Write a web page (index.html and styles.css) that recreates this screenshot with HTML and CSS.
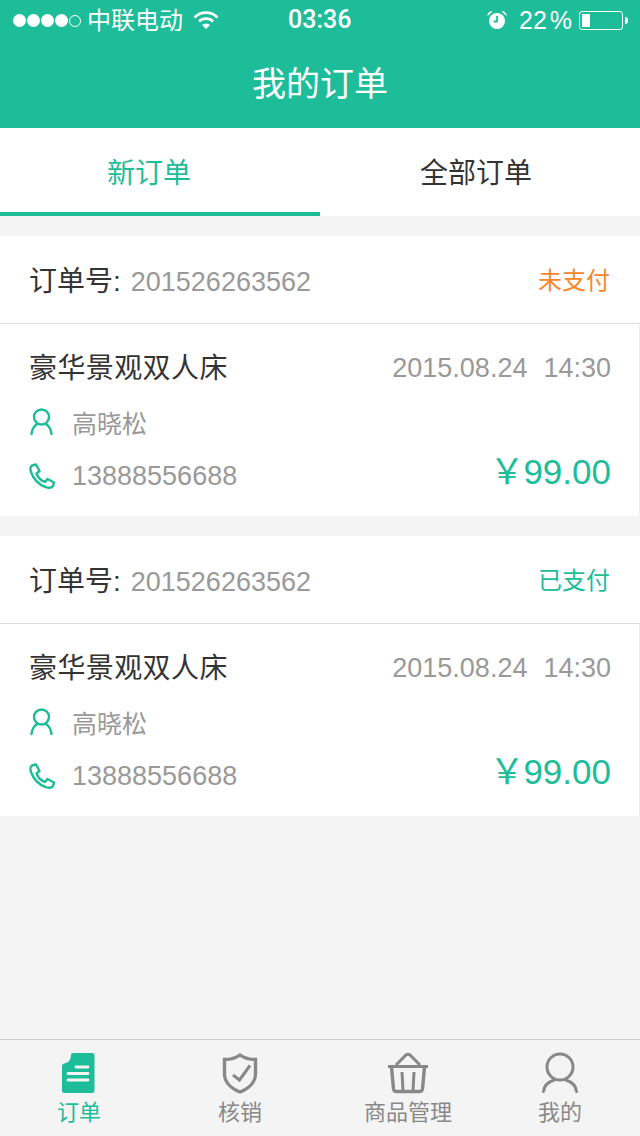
FILE: index.html
```html
<!DOCTYPE html>
<html lang="zh-CN">
<head>
    <meta charset="UTF-8">
    <title>我的订单</title>
    <link rel="stylesheet" href="styles.css">
</head>
<body>
<div class="page">
    <div class="top">
        <div class="status">
            <div class="status-left">
                <div class="signal"><i></i><i></i><i></i><i></i><i class="off"></i></div>
                <span class="carrier">中联电动</span>
                <svg class="wifi" width="26" height="20" viewBox="0 0 26 20">
                    <path d="M1.5 7.5 A16 16 0 0 1 24.5 7.5" fill="none" stroke="#fff" stroke-width="2.6"/>
                    <path d="M6 11.5 A10 10 0 0 1 20 11.5" fill="none" stroke="#fff" stroke-width="2.6"/>
                    <path d="M9 15 L13 19 L17 15 A6 6 0 0 0 9 15 Z" fill="#fff"/>
                </svg>
            </div>
            <span class="clock">03:36</span>
            <div class="status-right">
                <svg class="alarm" width="22" height="20" viewBox="0 0 22 20">
                    <circle cx="11" cy="11" r="8" fill="#fff"/>
                    <path d="M1.5 6 A4 4 0 0 1 6.5 1.5 Z M20.5 6 A4 4 0 0 0 15.5 1.5 Z" fill="#fff"/>
                    <path d="M11 6 V11.5 H7.5" fill="none" stroke="#1dbd9a" stroke-width="1.8"/>
                </svg>
                <span class="percent">22 %</span>
                <div class="battery"><div class="battery-fill"></div></div>
                <div class="battery-tip"></div>
            </div>
        </div>
        <div class="title">我的订单</div>
    </div>

    <div class="tabs">
        <div class="tab on">新订单</div>
        <div class="tab">全部订单</div>
    </div>

    <div class="order">
        <div class="order-head">
            <div class="order-no"><span class="no-label">订单号:</span><span class="no">201526263562</span></div>
            <span class="state unpaid">未支付</span>
        </div>
        <div class="order-body">
            <div class="row row-name">
                <span class="name">豪华景观双人床</span>
                <span class="date"><span>2015.08.24</span><span>14:30</span></span>
            </div>
            <div class="row row-user">
                <div class="info">
                    <svg class="ico" width="26" height="28" viewBox="0 0 26 28">
                        <circle cx="12.5" cy="9" r="7.5" fill="none" stroke="#1dbd9a" stroke-width="2.4"/>
                        <path d="M2.5 26 C3 21.5 5 18 8 16 M22.5 26 C22 21.5 20 18 17 16" fill="none" stroke="#1dbd9a" stroke-width="2.4" stroke-linecap="round"/>
                    </svg>
                    <span class="person">高晓松</span>
                </div>
            </div>
            <div class="row row-phone">
                <div class="info">
                    <svg class="ico" width="26" height="26" viewBox="0 0 26 26">
                        <path d="M3 2.5 L7 1.5 L10.5 8 L7.5 10.5 C9 14.5 12 17.5 16 19 L18.5 16 L25 19.5 L24 23 C22.5 25 19 25 16.5 24 C9.5 21.5 4.5 16 2 9 C1.2 6.5 1.5 3.5 3 2.5 Z" fill="none" stroke="#1dbd9a" stroke-width="2.4" stroke-linejoin="round"/>
                    </svg>
                    <span class="phone">13888556688</span>
                </div>
                <span class="price"><span class="yen">￥</span>99.00</span>
            </div>
        </div>
    </div>

    <div class="order">
        <div class="order-head">
            <div class="order-no"><span class="no-label">订单号:</span><span class="no">201526263562</span></div>
            <span class="state paid">已支付</span>
        </div>
        <div class="order-body">
            <div class="row row-name">
                <span class="name">豪华景观双人床</span>
                <span class="date"><span>2015.08.24</span><span>14:30</span></span>
            </div>
            <div class="row row-user">
                <div class="info">
                    <svg class="ico" width="26" height="28" viewBox="0 0 26 28">
                        <circle cx="12.5" cy="9" r="7.5" fill="none" stroke="#1dbd9a" stroke-width="2.4"/>
                        <path d="M2.5 26 C3 21.5 5 18 8 16 M22.5 26 C22 21.5 20 18 17 16" fill="none" stroke="#1dbd9a" stroke-width="2.4" stroke-linecap="round"/>
                    </svg>
                    <span class="person">高晓松</span>
                </div>
            </div>
            <div class="row row-phone">
                <div class="info">
                    <svg class="ico" width="26" height="26" viewBox="0 0 26 26">
                        <path d="M3 2.5 L7 1.5 L10.5 8 L7.5 10.5 C9 14.5 12 17.5 16 19 L18.5 16 L25 19.5 L24 23 C22.5 25 19 25 16.5 24 C9.5 21.5 4.5 16 2 9 C1.2 6.5 1.5 3.5 3 2.5 Z" fill="none" stroke="#1dbd9a" stroke-width="2.4" stroke-linejoin="round"/>
                    </svg>
                    <span class="phone">13888556688</span>
                </div>
                <span class="price"><span class="yen">￥</span>99.00</span>
            </div>
        </div>
    </div>

    <div class="bar">
        <div class="bar-item on">
            <svg class="doc" width="34" height="42" viewBox="0 0 34 42">
                <path d="M12 1 H31 Q33.5 1 33.5 3.5 V38.5 Q33.5 41 31 41 H3.5 Q1 41 1 38.5 V14 Q1 11.5 3 11.5 Q9.5 11 10 3 Q10 1 12 1 Z" fill="#1dbd9a"/>
                <path d="M15 15 H27 M7 21.5 H27 M7 28 H27" stroke="#f4f4f4" stroke-width="2.8" stroke-linecap="round"/>
            </svg>
            <span>订单</span>
        </div>
        <div class="bar-item">
            <svg width="36" height="42" viewBox="0 0 36 42">
                <path d="M18 3 C22 6 27 7.5 33.5 7.5 V22 C33.5 30 27 36.5 18 40 C9 36.5 2.5 30 2.5 22 V7.5 C9 7.5 14 6 18 3 Z" fill="none" stroke="#888" stroke-width="3.4"/>
                <path d="M11 23 L17.5 28 L28 13.5" fill="none" stroke="#888" stroke-width="3"/>
            </svg>
            <span>核销</span>
        </div>
        <div class="bar-item">
            <svg width="42" height="42" viewBox="0 0 42 42">
                <path d="M1 14.5 H41" stroke="#888" stroke-width="3"/>
                <path d="M9 13 L19 3 Q21 1.5 23 3 L33 13" fill="none" stroke="#888" stroke-width="3"/>
                <path d="M4.5 15 L6.5 37 Q7 39.5 9.5 39.5 H32.5 Q35 39.500 35.5 37 L37.5 15" fill="none" stroke="#888" stroke-width="3.4"/>
                <path d="M15 20 L16 39 M27 20 L26 39" stroke="#888" stroke-width="3"/>
            </svg>
            <span>商品管理</span>
        </div>
        <div class="bar-item">
            <svg width="38" height="42" viewBox="0 0 38 42">
                <circle cx="19" cy="15" r="13" fill="none" stroke="#888" stroke-width="3"/>
                <path d="M2.5 39.5 C3 33.5 7.5 30 13 28 M35.5 39.5 C35 33.5 30.5 30 25 28" fill="none" stroke="#888" stroke-width="3" stroke-linecap="round"/>
            </svg>
            <span>我的</span>
        </div>
    </div>
</div>
</body>
</html>
```

FILE: styles.css
```css
* {
    box-sizing: border-box;
}
html, body {
    margin: 0;
    padding: 0;
}
body {
    font-family: "Liberation Sans", "Noto Sans CJK SC", sans-serif;
    background-color: #f4f4f4;
}
.page {
    width: 640px;
    height: 1136px;
    display: flex;
    flex-direction: column;
    overflow: hidden;
}

/* header */
.top {
    height: 128px;
    background-color: #1dbd9a;
    color: white;
}
.status {
    height: 40px;
    position: relative;
    display: flex;
    justify-content: space-between;
    align-items: center;
    padding: 0 12px 0 13px;
}
.status-left, .status-right {
    display: flex;
    align-items: center;
}
.signal {
    display: flex;
    gap: 1px;
}
.signal i {
    width: 13px;
    height: 13px;
    border-radius: 50%;
    background-color: white;
}
.signal i.off {
    width: 12px;
    height: 12px;
    margin-top: 1px;
    background-color: transparent;
    border: 1px solid white;
}
.carrier {
    font-size: 24px;
    line-height: 30px;
    margin: 2px 0 0 6px;
}
.wifi {
    margin-left: 10px;
}
.clock {
    position: absolute;
    left: 288px;
    top: 5px;
    font-family: Roboto, sans-serif;
    font-size: 25px;
    font-weight: 500;
    line-height: 30px;
}
.percent {
    font-size: 25px;
    margin-left: 11px;
    word-spacing: -4px;
}
.battery {
    width: 44px;
    height: 19px;
    border: 1px solid white;
    border-radius: 3px;
    margin-left: 7px;
    padding: 2px;
}
.battery-fill {
    width: 8px;
    height: 100%;
    background-color: white;
}
.battery-tip {
    width: 3px;
    height: 7px;
    margin-left: 2px;
    background-color: white;
    border-radius: 0 3px 3px 0;
}
.title {
    height: 88px;
    line-height: 88px;
    text-align: center;
    font-size: 34px;
}

/* tabs */
.tabs {
    height: 88px;
    display: flex;
    background-color: white;
}
.tab {
    width: 320px;
    padding-top: 28px;
    padding-right: 8px;
    text-align: center;
    font-size: 28px;
    line-height: 36px;
    color: #333;
}
.tab.on {
    padding-right: 22px;
    color: #1dbd9a;
    border-bottom: 4px solid #1dbd9a;
}

/* order card */
.order {
    margin-top: 20px;
    height: 280px;
    background-color: white;
}
.order-head {
    height: 88px;
    display: flex;
    justify-content: space-between;
    align-items: center;
    padding: 0 30px 0 29px;
    border-bottom: 1px solid #ddd;
}
.order-no {
    margin-top: -2px;
}
.no-label {
    font-size: 28px;
    color: #333;
}
.no {
    margin-left: 10px;
    font-size: 27px;
    color: #999;
}
.state {
    font-size: 24px;
    margin-top: -2px;
}
.unpaid {
    color: #f7862b;
}
.paid {
    color: #1dbd9a;
}
.order-body {
    height: 192px;
    padding: 22px 28px 0 29px;
    border-right: 1px solid #eee;
}
.row {
    display: flex;
    justify-content: space-between;
    align-items: center;
}
.row-name {
    height: 40px;
}
.row-user {
    height: 59px;
    margin-top: 6px;
}
.row-phone {
    height: 50px;
}
.name {
    font-size: 28px;
    letter-spacing: 0.4px;
    color: #333;
}
.date {
    display: flex;
    gap: 16px;
    font-size: 27px;
    color: #999;
    margin-top: 4px;
}
.info {
    display: flex;
    align-items: center;
}
.ico {
    margin-right: 17px;
}
.person {
    font-size: 25px;
    color: #999;
}
.phone {
    font-size: 27px;
    color: #999;
}
.price {
    font-size: 35px;
    color: #1dbd9a;
    margin-top: -16px;
}
.yen {
    letter-spacing: -1px;
}

/* bottom bar */
.bar {
    margin-top: auto;
    height: 97px;
    display: grid;
    grid-template-columns: 158px 164px 172px 132px;
    border-top: 1px solid #ccc;
}
.bar-item {
    display: flex;
    flex-direction: column;
    align-items: center;
    padding-top: 12px;
    font-size: 22px;
    line-height: 30px;
    color: #888;
}
.bar-item span {
    margin-top: 4px;
}
.bar-item.on {
    color: #1dbd9a;
}
.doc {
    margin-left: -2px;
}
```
